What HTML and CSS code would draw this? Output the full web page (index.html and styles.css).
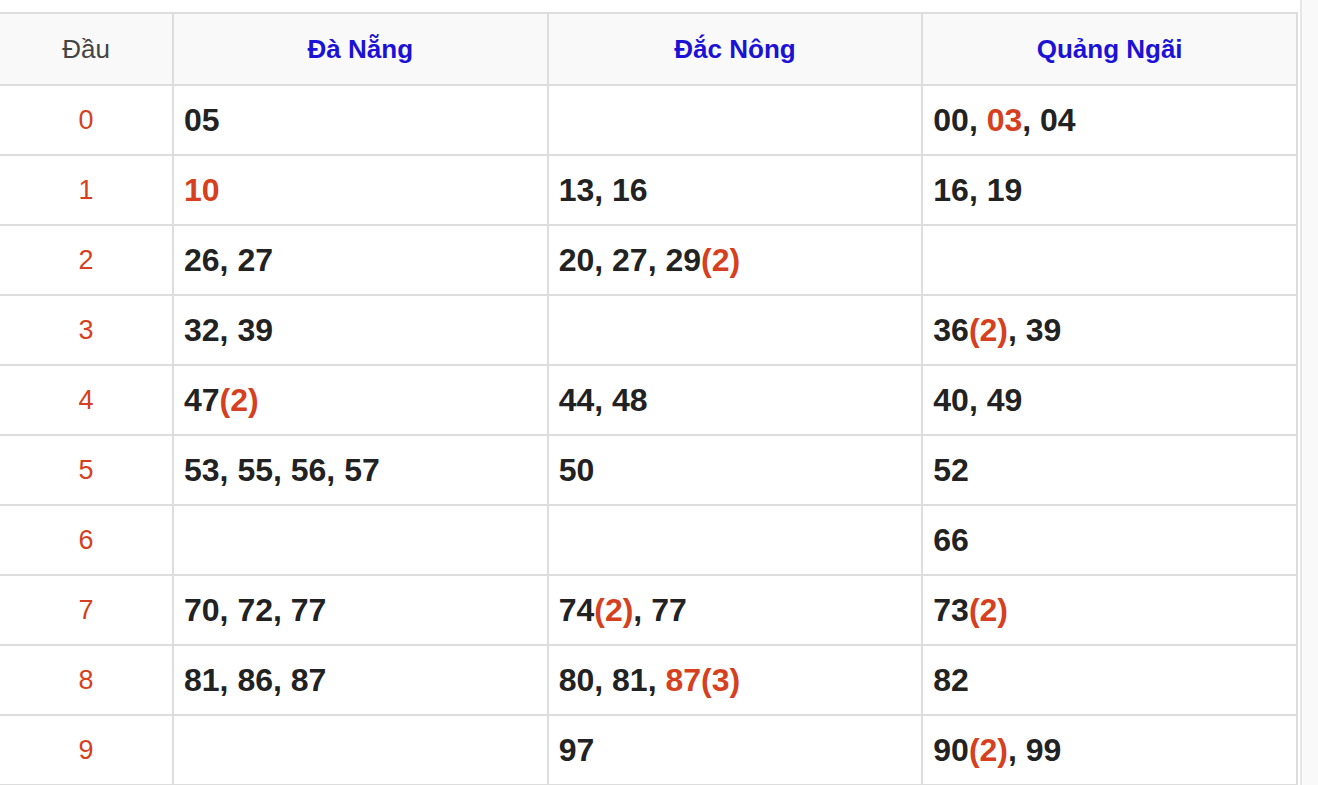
FILE: index.html
```html
<!DOCTYPE html>
<html lang="vi">
<head>
<meta charset="utf-8">
<link rel="stylesheet" href="styles.css">
</head>
<body>
<div class="page">
  <main class="main">
    <table class="loto">
      <thead>
        <tr>
          <th class="head-col">Đầu</th>
          <th class="prov">Đà Nẵng</th>
          <th class="prov">Đắc Nông</th>
          <th class="prov">Quảng Ngãi</th>
        </tr>
      </thead>
      <tbody>
        <tr><td class="head-col">0</td><td>05</td><td></td><td>00, <span class="r">03</span>, 04</td></tr>
        <tr><td class="head-col">1</td><td><span class="r">10</span></td><td>13, 16</td><td>16, 19</td></tr>
        <tr><td class="head-col">2</td><td>26, 27</td><td>20, 27, 29<span class="r">(2)</span></td><td></td></tr>
        <tr><td class="head-col">3</td><td>32, 39</td><td></td><td>36<span class="r">(2)</span>, 39</td></tr>
        <tr><td class="head-col">4</td><td>47<span class="r">(2)</span></td><td>44, 48</td><td>40, 49</td></tr>
        <tr><td class="head-col">5</td><td>53, 55, 56, 57</td><td>50</td><td>52</td></tr>
        <tr><td class="head-col">6</td><td></td><td></td><td>66</td></tr>
        <tr><td class="head-col">7</td><td>70, 72, 77</td><td>74<span class="r">(2)</span>, 77</td><td>73<span class="r">(2)</span></td></tr>
        <tr><td class="head-col">8</td><td>81, 86, 87</td><td>80, 81, <span class="r">87(3)</span></td><td>82</td></tr>
        <tr><td class="head-col">9</td><td></td><td>97</td><td>90<span class="r">(2)</span>, 99</td></tr>
      </tbody>
    </table>
  </main>
  <aside class="side"></aside>
</div>
</body>
</html>
```
FILE: styles.css
```css
html, body {
  margin: 0;
  padding: 0;
  background: #fff;
  font-family: "Liberation Sans", Arial, sans-serif;
  overflow: hidden;
}
.page {
  display: flex;
  width: 1318px;
  height: 785px;
}
.main {
  width: 1300px;
  padding-top: 12px;
  box-sizing: border-box;
  overflow: hidden;
}
.side {
  flex: 1;
  background: #f9f9f9;
  border-left: 2px solid #e6e6e6;
}
.loto {
  border-collapse: collapse;
  table-layout: fixed;
  width: 1300px;
  margin-left: -2px;
}
.loto th, .loto td {
  border: 2px solid #dddddd;
  height: 68px;
  padding: 0 0 0 10px;
  text-align: left;
  vertical-align: middle;
}
.loto th {
  height: 70px;
  background: #f9f9f9;
  text-align: center;
  padding: 0;
}
.loto th.prov {
  color: #1b12d6;
  font-weight: bold;
  font-size: 26px;
}
.loto th.head-col {
  color: #444;
  font-weight: normal;
  font-size: 26px;
}
.loto td {
  font-size: 32px;
  font-weight: bold;
  color: #222;
}
.loto td.head-col {
  text-align: center;
  padding: 0;
  font-weight: normal;
  font-size: 27px;
  color: #d63f20;
}
.loto th:nth-child(1) { width: 172px; }
.r { color: #d63f20; }
```
